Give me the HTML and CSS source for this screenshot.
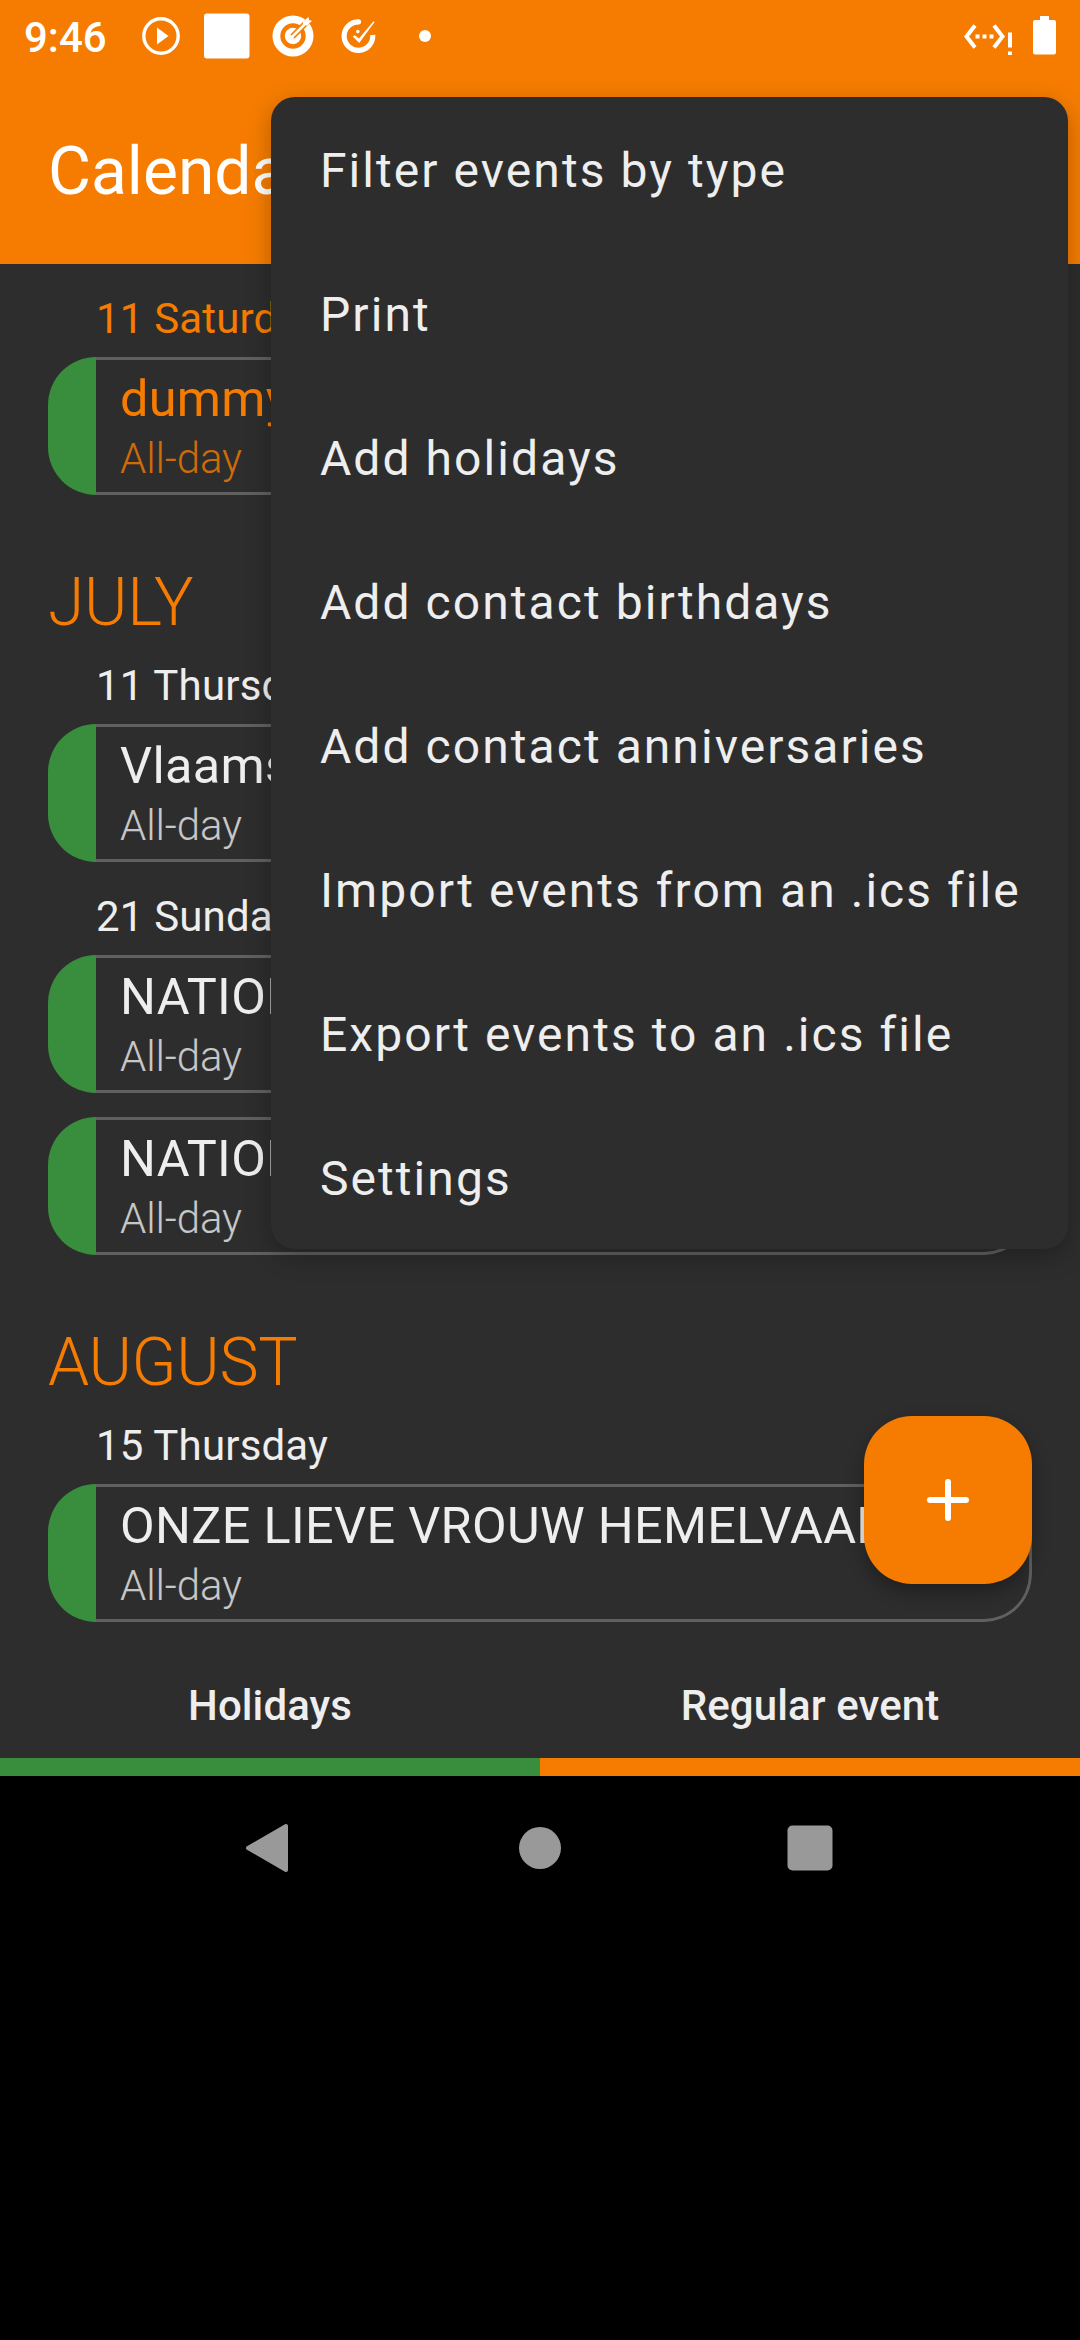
FILE: index.html
```html
<!DOCTYPE html>
<html lang="en">
<head>
<meta charset="utf-8">
<title>Calendar</title>
<link rel="stylesheet" href="styles.css">
</head>
<body>
<div class="app">
  <header class="top">
    <div class="status">
      <span class="clock">9:46</span>
      <svg class="notifications" width="300" height="72" viewBox="140 0 300 72" fill="#fff">
        <circle cx="161" cy="36" r="17.2" fill="none" stroke="#fff" stroke-width="3.4"/>
        <path d="M157 27.5v17l11.5-8.5z"/>
        <rect x="204" y="13.500" width="45.500" height="45" rx="3"/>
        <circle cx="293" cy="36" r="16.600" fill="none" stroke="#fff" stroke-width="7.800"/>
        <circle cx="293" cy="36" r="8.200"/>
        <path d="M292.500 36.500L314 15" stroke="#f57c00" stroke-width="6"/>
        <path d="M292.500 36.500L306 23" stroke="#fff" stroke-width="2.600" stroke-linecap="round"/>
        <path d="M303 25v-3.500l5.500-4.500.8 3.200 2.700.6-5 5z"/>
        <path d="M358.500 21.800A14.300 14.300 0 1 0 372.700 35" fill="none" stroke="#fff" stroke-width="5.200"/>
        <circle cx="358.500" cy="21.800" r="2.600"/>
        <path d="M352.700 36.500l2.100-1.300 4.200 3.400 14.500-17.300 1.100.8-15.400 21z"/>
        <circle cx="357.800" cy="31.600" r="1.800"/>
        <circle cx="425" cy="36" r="6"/>
      </svg>
      <svg class="system" width="100" height="72" viewBox="960 0 100 72" fill="#fff">
        <path d="M975 25.500L966.500 36.500l8.500 11M994 25.500l8.500 11-8.500 11" fill="none" stroke="#fff" stroke-width="4"/>
        <path d="M975.500 34.500h4v4h-4zM982.500 34.500h4v4h-4zM989.500 34.500h4v4h-4zM1008 32.500h4v15h-4zM1008 51.500h4v3.500h-4z"/>
        <path d="M1040 16h9v4h5a2 2 0 0 1 2 2v30.500a2 2 0 0 1-2 2h-19a2 2 0 0 1-2-2V22a2 2 0 0 1 2-2h5z"/>
      </svg>
    </div>
    <h1 class="title">Calendar</h1>
  </header>

  <main class="events">
    <h3 class="day past">11 Saturday</h3>
    <article class="event past"><i class="stripe"></i><div class="info"><p class="name">dummy</p><p class="time">All-day</p></div></article>

    <h2 class="month">JULY</h2>
    <h3 class="day">11 Thursday</h3>
    <article class="event"><i class="stripe"></i><div class="info"><p class="name">Vlaams</p><p class="time">All-day</p></div></article>
    <h3 class="day">21 Sunday</h3>
    <article class="event"><i class="stripe"></i><div class="info"><p class="name">NATION</p><p class="time">All-day</p></div></article>
    <article class="event"><i class="stripe"></i><div class="info"><p class="name">NATION</p><p class="time">All-day</p></div></article>

    <h2 class="month">AUGUST</h2>
    <h3 class="day">15 Thursday</h3>
    <article class="event"><i class="stripe"></i><div class="info"><p class="name">ONZE LIEVE VROUW HEMELVAART</p><p class="time">All-day</p></div></article>
  </main>

  <footer class="legend">
    <span class="type holidays">Holidays</span>
    <span class="type regular">Regular event</span>
  </footer>

  <button class="fab" aria-label="New event">
    <svg width="48" height="48" viewBox="0 0 48 48"><path d="M24 6v36M6 24h36" stroke="#fff" stroke-width="6" stroke-linecap="round"/></svg>
  </button>

  <ul class="menu">
    <li>Filter events by type</li>
    <li>Print</li>
    <li>Add holidays</li>
    <li>Add contact birthdays</li>
    <li>Add contact anniversaries</li>
    <li>Import events from an .ics file</li>
    <li>Export events to an .ics file</li>
    <li>Settings</li>
  </ul>
</div>

<nav class="navbar">
  <svg width="60" height="60" viewBox="0 0 60 60"><path d="M8 30L46 8v44z" fill="#999" stroke="#999" stroke-width="4" stroke-linejoin="round"/></svg>
  <svg width="60" height="60" viewBox="0 0 60 60"><circle cx="30" cy="30" r="21" fill="#999"/></svg>
  <svg width="60" height="60" viewBox="0 0 60 60"><rect x="7.500" y="7.500" width="45" height="45" rx="5" fill="#999"/></svg>
</nav>
</body>
</html>
```
FILE: styles.css
```css
* {
  box-sizing: border-box;
  margin: 0;
  padding: 0;
}

body {
  width: 1080px;
  height: 2340px;
  overflow: hidden;
  background: #000;
  color: #eee;
  font-family: Roboto, "Noto Sans", sans-serif;
  font-size: 42px;
  line-height: 48px;
}

.app {
  position: relative;
  display: flex;
  flex-direction: column;
  height: 1776px;
  background: #2d2d2d;
}

.top {
  flex: none;
  height: 264px;
  background: #f57c00;
  color: #fff;
}

.status {
  display: flex;
  align-items: center;
  height: 72px;
  padding: 0 20px 0 24px;
}

.clock {
  width: 116px;
  font-weight: 500;
  padding-top: 3px;
}

.system {
  margin-left: auto;
}

.title {
  padding: 61px 48px 0;
  font-size: 66px;
  font-weight: 400;
  line-height: 78px;
}

.events {
  flex: 1;
  min-height: 0;
  padding: 0 48px;
}

.month {
  margin-top: 69px;
  color: #f57c00;
  font-size: 66px;
  font-weight: 300;
  letter-spacing: -0.3px;
  line-height: 78px;
}

.day {
  padding: 31px 0 14px 48px;
  font-size: 42px;
  font-weight: 400;
  letter-spacing: 0.18px;
}

.month + .day {
  padding-top: 20px;
}

.event {
  display: flex;
  height: 138px;
  border-radius: 48px;
  overflow: hidden;
}

.event + .event {
  margin-top: 24px;
}

.stripe {
  flex: none;
  width: 48px;
  background: #388e3c;
}

.info {
  flex: 1;
  min-width: 0;
  padding: 9px 24px 0;
  border: 3px solid #606060;
  border-left: 0;
  border-radius: 0 48px 48px 0;
}

.name {
  font-size: 50.4px;
  letter-spacing: 0.32px;
  line-height: 60px;
  white-space: nowrap;
  overflow: hidden;
}

.time {
  margin-top: 6px;
  font-weight: 300;
  letter-spacing: -0.1px;
  opacity: 0.8;
}

.past {
  color: #f57c00;
}

.legend {
  display: grid;
  grid-template-columns: 1fr 1fr;
  flex: none;
  height: 94px;
  text-align: center;
  font-weight: 500;
  letter-spacing: 0.1px;
}

.type {
  border-bottom: 18px solid;
}

.holidays {
  border-color: #388e3c;
}

.regular {
  border-color: #f57c00;
}

.fab {
  position: absolute;
  right: 48px;
  bottom: 192px;
  display: grid;
  place-items: center;
  width: 168px;
  height: 168px;
  border: 0;
  border-radius: 48px;
  background: #f57c00;
  box-shadow: 0 8px 18px rgba(0, 0, 0, 0.3);
}

.menu {
  position: absolute;
  top: 97px;
  right: 12px;
  width: 797px;
  border-radius: 24px;
  background: #2d2d2d;
  box-shadow: 0 8px 24px rgba(0, 0, 0, 0.26);
  list-style: none;
}

.menu li {
  height: 144px;
  padding-left: 49px;
  font-size: 48px;
  letter-spacing: 2.06px;
  line-height: 147px;
  white-space: nowrap;
}

.navbar {
  display: flex;
  justify-content: space-between;
  padding: 42px 240px;
}
```
